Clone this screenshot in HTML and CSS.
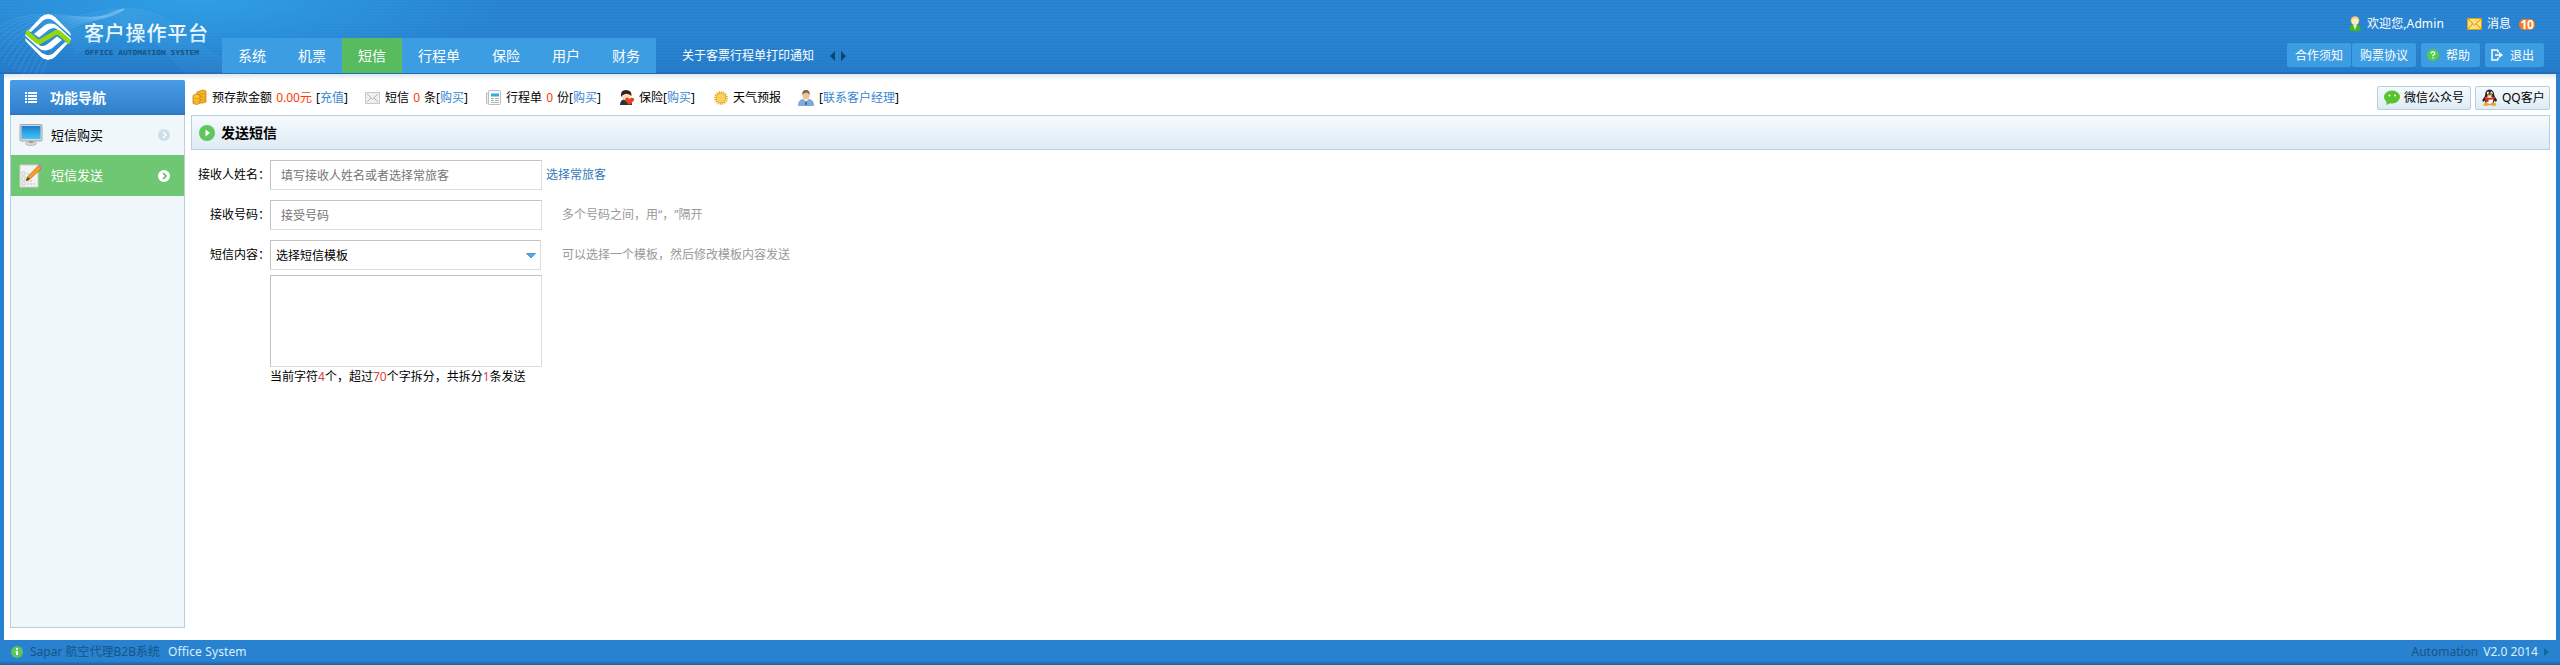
FILE: index.html
```html
<!DOCTYPE html>
<html lang="zh-CN">
<head>
<meta charset="utf-8">
<title>客户操作平台</title>
<link rel="stylesheet" href="styles.css">
</head>
<body>
<div class="page">
  <header class="header">
    <svg class="waves" width="330" height="74" viewBox="0 0 330 74" id="waves" fill="none" stroke="#8fd0fa"></svg>
    <div class="logo">
      <svg class="mark" width="46" height="46" viewBox="0 0 46 46">
        <defs>
          <clipPath id="round"><path d="M23 0C30 0 33 4 38 9Q46 15 46 23Q46 31 38 37Q30 46 23 46Q16 46 8 37Q0 31 0 23Q0 15 8 9Q15 0 23 0Z"/></clipPath>
          <path id="bands" d="M3 17L16 3Q23-3 30 3L46 19.500V22L29 7Q23 3 18 6.500L6 18ZM9 20L20 11Q28 7.500 33 12.500L46 24.500V26.500L31 14.500Q28 13 24 15.500L14 23.500Z"/>
        </defs>
        <g clip-path="url(#round)" fill="#fff">
          <use href="#bands"/>
          <use href="#bands" transform="rotate(180 23 23)"/>
          <path d="M-1 16L11 26.500Q14 29 17 26.500L29 19.500Q32 17 35 19.500L47 30" fill="none" stroke="#93d70c" stroke-width="4.600"/>
        </g>
      </svg>
      <svg class="wordmark" width="126" height="36" viewBox="0 0 126 36">
        <defs><linearGradient id="wg" x1="0" y1="0" x2="0" y2="1"><stop offset=".3" stop-color="#fff"/><stop offset="1" stop-color="#b9e2fb"/></linearGradient></defs>
        <text class="w-cn" x="0" y="20" textLength="124" lengthAdjust="spacing" fill="url(#wg)">客户操作平台</text>
        <text class="w-en" x="1" y="34" textLength="114" lengthAdjust="spacingAndGlyphs">OFFICE AUTOMATION SYSTEM</text>
      </svg>
    </div>
    <nav class="nav">
      <a>系统</a><a>机票</a><a class="on">短信</a><a>行程单</a><a>保险</a><a>用户</a><a>财务</a>
    </nav>
    <div class="notice"><span>关于客票行程单打印通知</span>
      <svg width="16" height="10" viewBox="0 0 16 10" fill="#0b4673"><path d="M5 0v10L0 5zM11 0v10l5-5z"/></svg>
    </div>
    <div class="user">
      <div class="hello">
        <svg width="12" height="16" viewBox="0 0 12 16"><path d="M.5 14.5Q.5 8.500 4 8.500H8Q11.500 8.500 11.500 14.500Q6 16 .5 14.500Z" fill="#45b51c"/><path d="M4 9h4l-2 5z" fill="#d9f5cf"/><circle cx="6" cy="4.600" r="4.300" fill="#f7c878"/><circle cx="6" cy="5.500" r="3.200" fill="#fde9c3"/></svg>
        <span class="name">欢迎您,Admin</span>
        <svg width="15" height="12" viewBox="0 0 15 12"><rect x=".5" y=".5" width="14" height="11" fill="#ffe37a" stroke="#e89a1c"/><path d="M1 1l6.500 6L14 1M1 11l4.500-5M14 11L9.500 6" fill="none" stroke="#d18a1b"/></svg>
        <span class="msg">消息</span><b class="badge">10</b>
      </div>
      <div class="links">
        <a>合作须知</a><a>购票协议</a>
        <a class="ic"><svg width="12" height="12" viewBox="0 0 12 12"><circle cx="6" cy="6" r="6" fill="#55cb4f"/><path d="M4.200 4.500Q4.200 2.800 6 2.800T7.800 4.400Q7.800 5.400 6 6.300V7.300M6 8.300V9.600" fill="none" stroke="#fff" stroke-width="1.300"/></svg><span>帮助</span></a>
        <a class="ic"><svg width="12" height="12" viewBox="0 0 12 12"><path d="M7 1H1V11H7M7 1V3.500M7 11V8.500M4 6H9" fill="none" stroke="#fff" stroke-width="1.500"/><path d="M8 3l4 3-4 3z" fill="#fff"/></svg><span>退出</span></a>
      </div>
    </div>
  </header>

  <main class="main">
    <aside class="side">
      <h2><svg width="12" height="11" viewBox="0 0 12 11" fill="#fff"><path d="M0 0h2v2H0zM3 0h9v2H3zM0 3h2v2H0zM3 3h9v2H3zM0 6h2v2H0zM3 6h9v2H3zM0 9h2v2H0zM3 9h9v2H3z"/></svg><span>功能导航</span></h2>
      <a class="item">
        <svg width="24" height="24" viewBox="0 0 24 24"><defs><linearGradient id="scr" x1="0" y1="0" x2="0" y2="1"><stop stop-color="#1b7fd0"/><stop offset="1" stop-color="#42c6f5"/></linearGradient></defs><ellipse cx="12" cy="20.500" rx="5.500" ry="2" fill="#d8d8d8" stroke="#aaa" stroke-width=".7"/><path d="M10 17h4v3h-4z" fill="#999"/><rect x="1" y="1.500" width="22" height="16.500" rx="1" fill="#d5d9dd" stroke="#a7a4a4"/><rect x="2.500" y="3" width="19" height="13" fill="url(#scr)"/></svg>
        <span>短信购买</span>
        <svg class="go" width="12" height="12" viewBox="0 0 12 12"><circle cx="6" cy="6" r="6" fill="#cbdfe9"/><path d="M5 3l3 3-3 3" fill="none" stroke="#fff" stroke-width="1.400"/></svg>
      </a>
      <a class="item on">
        <svg width="24" height="24" viewBox="0 0 24 24"><path d="M1 1h18v22H1z" fill="#f3f3f3" stroke="#cfd0cf"/><path d="M3 8h3v3H3zM3 13h3v3H3zM3 18h3v3H3z" fill="#fff" stroke="#bbb" stroke-width=".8"/><path d="M8 20h9M8 17h5M8 10h4" stroke="#bbb" stroke-dasharray="2 1"/><path d="M19 2l3 3L11 15l-4 2 1.500-4z" fill="#f6a11e" stroke="#b16b1b" stroke-width=".7"/><path d="M8.500 13l2.500 2-4 2z" fill="#5b4632"/><path d="M18.500 2.500L21 .5 23.500 3 22 5z" fill="#cf7cab"/></svg>
        <span>短信发送</span>
        <svg class="go" width="12" height="12" viewBox="0 0 12 12"><circle cx="6" cy="6" r="6" fill="#fff"/><path d="M5 3l3 3-3 3" fill="none" stroke="#57b65b" stroke-width="1.500"/></svg>
      </a>
    </aside>

    <section class="content">
      <div class="info">
        <div class="cell c1"><svg width="14" height="15" viewBox="0 0 14 15"><path d="M4 2l6-2 3 1v11l-3 1H4z" fill="#f7b521" stroke="#bd790d" stroke-width=".7"/><path d="M0 5.500L3 4l4 1v8l-3 1.500-4-1z" fill="#fbc52f" stroke="#b8730b" stroke-width=".7"/><path d="M0 8l3 1 4-1M0 11l3 1 4-1M7 4h6M7 7h6M7 10h6" fill="none" stroke="#d28c12" stroke-width=".7"/></svg><span>预存款金额 <i>0.00元</i> [<a>充值</a>]</span></div>
        <div class="cell c2"><svg width="15" height="12" viewBox="0 0 15 12"><rect x=".5" y=".5" width="14" height="11" fill="#f0f0f0" stroke="#c9c9c9"/><path d="M2 2l5.500 5L13 2M2 10l4-4M13 10L9 6" fill="none" stroke="#b5b5b5"/></svg><span>短信 <i>0</i> 条[<a>购买</a>]</span></div>
        <div class="cell c3"><svg width="15" height="15" viewBox="0 0 15 15"><path d="M.5 3h3v11h-2l-1-1z" fill="#eee" stroke="#bbb"/><rect x="2.500" y=".5" width="12" height="14" rx="1" fill="#fafafa" stroke="#bdbdbd"/><path d="M5 5h8" stroke="#2baee0" stroke-width="3"/><path d="M5 8.500h3M9 8.500h4M5 10.500h3M9 10.500h4M5 12.500h8" stroke="#b4b4b4"/></svg><span>行程单 <i>0</i> 份[<a>购买</a>]</span></div>
        <div class="cell c4"><svg width="14" height="16" viewBox="0 0 14 16"><path d="M0 15Q0 9 6 9t6 6z" fill="#28333d"/><circle cx="6" cy="6" r="4.300" fill="#fbd9b4"/><path d="M1 7Q0 0 6 0t5.500 6Q8 3 5 4T1 7z" fill="#35211a"/><path d="M9 15L5 10.500Q5 7.500 7.500 7.500L9.200 9Q11 7 13 8t.500 3z" fill="#e8431f"/></svg><span>保险[<a>购买</a>]</span></div>
        <div class="cell c5"><svg width="14" height="14" viewBox="0 0 14 14"><circle cx="7" cy="7" r="6" fill="none" stroke="#e5b42c" stroke-width="2" stroke-dasharray="1.200 1.100"/><circle cx="7" cy="7" r="5" fill="#f9d15b" stroke="#e0ab2a"/></svg><span>天气预报</span></div>
        <div class="cell c6"><svg width="16" height="16" viewBox="0 0 16 16"><path d="M.5 15.500Q.5 10 5 9.500h6q4.500.5 4.500 6z" fill="#7faadb" stroke="#5b86bd" stroke-width=".6"/><path d="M5.500 9l2.500 3 2.500-3z" fill="#fff"/><path d="M8 10l1 4-1 1.500L7 14z" fill="#33558c"/><ellipse cx="8" cy="5" rx="3.500" ry="4.500" fill="#f2c193"/><path d="M4.300 5Q4 0 8 0t3.700 5Q10 2.500 8 2.600T4.300 5z" fill="#7b6147"/></svg><span>[<a>联系客户经理</a>]</span></div>
        <div class="contacts">
          <a><svg width="16" height="15" viewBox="0 0 16 15"><ellipse cx="8" cy="7" rx="8" ry="6.500" fill="#56c32f"/><path d="M2.500 11v4l4-2z" fill="#56c32f"/><circle cx="5.500" cy="5.500" r="1" fill="#fff"/><circle cx="11" cy="5.500" r="1" fill="#fff"/></svg><span>微信公众号</span></a>
          <a><svg width="16" height="17" viewBox="0 0 16 17"><path d="M3 7Q3 .5 7.500.5T12.500 7l2.500 4-1 2-1.500-1.500Q12 15 8 15.500 3 15 2.500 11.500L1 13 .3 11z" fill="#242424"/><ellipse cx="7.500" cy="11" rx="3.800" ry="4" fill="#fff"/><ellipse cx="6" cy="4" rx="1.200" ry="1.500" fill="#fff"/><ellipse cx="9.500" cy="4" rx="1.200" ry="1.500" fill="#fff"/><circle cx="6.300" cy="4.200" r=".5"/><circle cx="9.200" cy="4.200" r=".5"/><ellipse cx="7.700" cy="6.300" rx="2.500" ry=".9" fill="#fbb31b"/><path d="M2.800 7.500q5 2.500 10 0v2Q10 11 6.500 10.700V13H4v-3l-1.500-.7z" fill="#e02b1f"/><ellipse cx="4.300" cy="15.500" rx="3" ry="1.400" fill="#f9a51a"/><ellipse cx="11.500" cy="15.500" rx="3" ry="1.400" fill="#f9a51a"/></svg><span>QQ客户</span></a>
        </div>
      </div>
      <h1 class="title"><svg width="16" height="16" viewBox="0 0 16 16"><circle cx="8" cy="8" r="8" fill="#5ec65d"/><path d="M6.500 4.500L11 8l-4.500 3.500z" fill="#fff"/></svg><span>发送短信</span></h1>
      <form class="form">
        <div class="row"><label>接收人姓名：</label><input type="text" placeholder="填写接收人姓名或者选择常旅客"><a class="pick">选择常旅客</a></div>
        <div class="row"><label>接收号码：</label><input type="text" placeholder="接受号码"><span class="hint">多个号码之间，用“，”隔开</span></div>
        <div class="row"><label>短信内容：</label><div class="select"><span>选择短信模板</span><svg width="10" height="6" viewBox="0 0 10 6"><path d="M.5.500h9L5 5z" fill="#5aa9e6" stroke="#3f86bd" stroke-width=".8"/></svg></div><span class="hint wide">可以选择一个模板，然后修改模板内容发送</span></div>
        <div class="area"><textarea></textarea><p>当前字符<i>4</i>个，超过<i>70</i>个字拆分，共拆分<i>1</i>条发送</p></div>
      </form>
    </section>
  </main>

  <footer class="footer">
    <svg width="12" height="12" viewBox="0 0 12 12"><circle cx="6" cy="6" r="6" fill="#5bc75b"/><path d="M5 2h2v2H5zM4.500 5H7v4H5V6h-.5z" fill="#fff"/></svg>
    <span class="dim sys">Sapar 航空代理B2B系统</span><span class="office">Office System</span>
    <span class="dim auto">Automation</span><span class="ver">V2.0 2014</span>
    <svg class="tri" width="5" height="8" viewBox="0 0 5 8"><path d="M0 0l5 4-5 4z" fill="#17649f"/></svg>
  </footer>
</div>
<script src="waves.js"></script>
</body>
</html>
```
FILE: waves.js
```js
// Fine curved lines behind the logo
const svg = document.getElementById('waves');
function add(d, opacity) {
  const p = document.createElementNS('http://www.w3.org/2000/svg', 'path');
  p.setAttribute('d', d);
  p.setAttribute('stroke-opacity', opacity);
  p.setAttribute('stroke-width', '.8');
  svg.appendChild(p);
}
// Left fan: rises from the lower left and merges towards the upper right
for (let i = 0; i < 13; i++) {
  add(`M${-22 + i * 5} ${48 + i * 3}C${2 + i * 4} ${14 + i * 3} ${34 + i * 2} ${12 + i * 1.5} ${72 + i} ${16 + i * .6}S${105 + i} ${12 + i * .3} 124 9`, .26);
}
// Right fan: crests behind the title and falls below the menu
for (let i = 0; i < 14; i++) {
  add(`M${62 + i} ${20 + i * 2.5}C${95 + i} ${12 + i * 2} ${108 + i} ${8 + i * 1.2} ${134 - i * .5} ${9 + i * 1.3}C${172 - i} ${10 + i * 2} ${190 - i} ${48 + i * 1.5} ${258 - i * 5} 78`, .2);
}
```
FILE: styles.css
```css
* { box-sizing: border-box; }
body { margin: 0; font: 12px/18px "Noto Sans", "Noto Sans CJK SC", sans-serif; color: #000; text-spacing-trim: space-all; }
i { font-style: normal; }
svg { display: block; flex: none; overflow: visible; }
span, a, label { white-space: nowrap; }
.page { width: 2560px; height: 665px; display: flex; flex-direction: column; background: #2882cf; overflow: hidden; }

.header {
  position: relative; height: 74px; display: flex; align-items: flex-start; color: #fff;
  background:
    linear-gradient(transparent 71px, rgba(10, 70, 130, .35) 74px),
    radial-gradient(ellipse 310px 68px at 195px 0, #2f9fe5, rgba(47, 159, 229, 0)),
    linear-gradient(transparent 35px, rgba(20, 85, 160, .16) 74px),
    repeating-linear-gradient(rgba(0, 40, 100, .05) 0 1px, transparent 1px 3px),
    #2985d2;
}
.waves { position: absolute; left: 0; top: 0; overflow: hidden; }
.logo { position: relative; width: 222px; padding: 14px 0 0 25px; display: flex; flex: none; }
.wordmark { margin: 7px 0 0 13px; }
.w-cn { font: 500 20px "Noto Sans CJK SC", sans-serif; }
.w-en { font: bold 7px "DejaVu Sans Mono", monospace; fill: #17527f; }
.nav { position: relative; display: flex; margin-top: 38px; height: 35px; background: #3c9de2; font-size: 14px; line-height: 36px; }
.nav a { padding: 0 16px; }
.nav .on { background: #58bb60; }
.notice { display: flex; align-items: center; gap: 16px; margin: 47px 0 0 26px; }
.user { margin-left: auto; padding: 14px 16px 0 0; width: 289px; }
.hello { display: flex; align-items: center; height: 20px; padding-left: 78px; }
.name { width: 78px; margin: 0 22px 0 6px; letter-spacing: .1px; }
.msg { margin-left: 5px; }
.badge { margin-left: 8px; width: 16px; height: 11px; border-radius: 5px; background: #ee7d22; line-height: 11px; text-align: center; letter-spacing: -.3px; }
.links { display: flex; margin-top: 9px; padding-left: 16px; }
.links a { width: 64px; height: 24px; flex: none; border-radius: 2px; background: #3c9de2; line-height: 25px; padding-left: 8px; margin-right: 1px; }
.links .ic { width: 59px; display: flex; align-items: center; gap: 7px; padding-left: 6px; margin: 0 1px 0 4px; }

.main { margin: 0 4px; height: 566px; padding: 6px 6px 12px; display: flex; gap: 6px; background: linear-gradient(#dce8f3, #fff 6px); }
.side { width: 175px; height: 548px; flex: none; border: 1px solid #b9cfdf; border-top: 0; background: #eff7fb; border-radius: 2px 2px 0 0; }
.side h2 { margin: 0 -1px; height: 35px; padding-left: 15px; display: flex; align-items: center; gap: 13px; font-size: 14px; color: #fff; border-radius: 2px 2px 0 0; background: linear-gradient(#4a9ce6, #3080cb 33px, #2b70b5); }
.item { display: flex; align-items: center; height: 40px; padding: 0 14px 0 8px; gap: 8px; font-size: 13px; }
.item span { padding-bottom: 1px; }
.item.on { height: 41px; background: #6fc773; color: #fff; }
.go { margin-left: auto; }
.content { flex: 1; }
.info { display: flex; align-items: center; height: 35px; padding-left: 2px; }
.cell { display: flex; align-items: center; gap: 5px; flex: none; word-spacing: 1px; }
.cell i { color: #ff3c00; }
.cell a { color: #3a86d0; }
.c1 { width: 172px; }
.c2 { width: 121px; }
.c3 { width: 134px; }
.c4 { width: 94px; }
.c5 { width: 84px; }
.contacts { display: flex; gap: 4px; margin-left: auto; }
.contacts a { width: 94px; height: 24px; display: flex; align-items: center; gap: 4px; padding-left: 6px; border: 1px solid #b9cfdf; border-radius: 2px; background: linear-gradient(#f5fafd, #deebf4); }
.contacts a + a { width: 75px; }
.title { margin: 0; height: 35px; padding-left: 7px; display: flex; align-items: center; gap: 6px; font-size: 14px; border: 1px solid #b9cfdf; background: linear-gradient(#f5fafd, #deebf5); }
.form { padding-top: 10px; }
.row { display: flex; height: 30px; margin-bottom: 10px; align-items: center; }
.row label { width: 79px; text-align: right; }
.row input, .select, textarea { width: 272px; height: 30px; border: 1px solid #ddd; border-color: #c3c3c3 #ddd #ddd #c3c3c3; background: #fff; font: inherit; padding: 1px 10px; margin: 0; border-radius: 0; resize: none; display: block; }
.row input::placeholder { color: #757575; }
.row .select { width: 271px; display: flex; align-items: center; justify-content: space-between; padding: 1px 4px 0 5px; }
.pick { margin-left: 4px; color: #337ab7; }
.hint { margin-left: 20px; color: #999; }
.hint.wide { margin-left: 21px; }
.area { margin: -5px 0 0 79px; }
.area textarea { height: 92px; }
.area p { margin: 1px 0 0; }
.area i { color: #d9413d; }

.footer { height: 25px; display: flex; align-items: center; padding: 0 11px 1px; color: #d9effd; background: linear-gradient(#2882cf 21px, #1d5f9c 25px); }
.dim { color: #165487; }
.sys { width: 138px; margin-left: 7px; }
.office { letter-spacing: .12px; }
.auto { margin-left: auto; }
.ver { margin: 0 6px 0 5px; }
```
